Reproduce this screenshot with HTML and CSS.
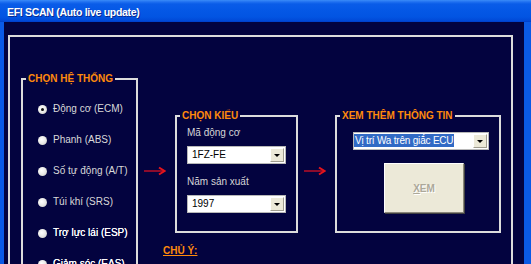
FILE: index.html
```html
<!DOCTYPE html>
<html lang="vi">
<head>
<meta charset="utf-8">
<title>EFI SCAN</title>
<link rel="stylesheet" href="styles.css">
</head>
<body>
<div class="window">
  <div class="titlebar"><span class="title">EFI SCAN (Auto live update)</span></div>
  <div class="client">
    <div class="frame">
      <fieldset class="group group-system">
        <legend>CHỌN HỆ THỐNG</legend>
        <div class="radios">
          <label class="radio checked"><span class="dot"></span>Động cơ (ECM)</label>
          <label class="radio"><span class="dot"></span>Phanh (ABS)</label>
          <label class="radio"><span class="dot"></span>Số tự động (A/T)</label>
          <label class="radio"><span class="dot"></span>Túi khí (SRS)</label>
          <label class="radio bright"><span class="dot"></span>Trợ lực lái (ESP)</label>
          <label class="radio bright"><span class="dot"></span>Giảm sóc (EAS)</label>
        </div>
      </fieldset>
      <div class="main">
        <div class="row">
          <svg class="arrow" width="22" height="10" viewBox="0 0 22 10"><line x1="0" y1="5" x2="19" y2="5" stroke="#8c0b2c" stroke-width="2"/><polyline points="15,1.5 20.5,5 15,8.5" fill="none" stroke="#e3141c" stroke-width="2"/></svg>
          <fieldset class="group group-model">
            <legend>CHỌN KIỂU</legend>
            <div class="model-body">
              <div class="field-label">Mã động cơ</div>
              <div class="select"><span class="value">1FZ-FE</span><span class="drop"></span></div>
              <div class="field-label second">Năm sản xuất</div>
              <div class="select"><span class="value">1997</span><span class="drop"></span></div>
            </div>
          </fieldset>
          <svg class="arrow" width="22" height="10" viewBox="0 0 22 10"><line x1="0" y1="5" x2="19" y2="5" stroke="#8c0b2c" stroke-width="2"/><polyline points="15,1.5 20.5,5 15,8.5" fill="none" stroke="#e3141c" stroke-width="2"/></svg>
          <fieldset class="group group-info">
            <legend>XEM THÊM THÔNG TIN</legend>
            <div class="info-body">
              <div class="select select-wide"><span class="value"><span class="highlight">Vị trí Wa trên giắc ECU</span></span><span class="drop"></span></div>
              <button class="btn" type="button" disabled><u>X</u>EM</button>
            </div>
          </fieldset>
        </div>
        <div class="note">CHỦ Ý:</div>
      </div>
    </div>
  </div>
</div>
</body>
</html>
```

FILE: styles.css
```css
html, body {
  margin: 0;
  padding: 0;
  overflow: hidden;
}

body {
  font-family: "Liberation Sans", Arial, sans-serif;
  background: #03033f;
}

.window {
  width: 531px;
  height: 264px;
  display: flex;
  flex-direction: column;
  overflow: hidden;
}

.titlebar {
  height: 22px;
  flex: none;
  display: flex;
  align-items: center;
  padding-left: 7px;
  background: linear-gradient(to bottom, #3a8cf8 0px, #1f6ff0 2px, #0a5ce8 4px, #0558e6 10px, #0254e2 17px, #0048d6 21px, #003cc4 22px);
}

.title {
  color: #ffffff;
  font-weight: bold;
  font-size: 10.5px;
  letter-spacing: -0.3px;
  text-shadow: 1px 1px 0 #0a2a90;
  margin-top: 1px;
}

.client {
  flex: 1;
  background: #03033f;
  border-left: 4px solid #0a5ae6;
  border-right: 7px solid #0a5ae6;
  overflow: hidden;
}

.frame {
  box-sizing: border-box;
  width: 505px;
  height: 320px;
  margin: 13px 0 0 4px;
  border: 2px solid #dcdcdc;
  display: flex;
  align-items: flex-start;
}

.group {
  margin: 0;
  padding: 0;
  border: 2px solid #dcdcdc;
  box-sizing: border-box;
  min-width: 0;
}

.group legend {
  margin-left: 3px;
  padding: 0 2px;
  font-size: 10px;
  line-height: 12px;
  font-weight: bold;
  color: #ff8a0c;
}

.group-system {
  width: 117px;
  height: 260px;
  margin: 36px 0 0 11px;
}

.radios {
  display: flex;
  flex-direction: column;
  gap: 19px;
  padding: 18px 0 0 15px;
}

.radio {
  display: flex;
  align-items: center;
  gap: 6px;
  font-size: 10px;
  line-height: 12px;
  color: #d9d9d9;
  white-space: nowrap;
}

.radio.bright {
  color: #ffffff;
  text-shadow: 0 0 0.2px #ffffff;
}

.dot {
  width: 9px;
  height: 9px;
  border-radius: 50%;
  background: radial-gradient(circle at 40% 40%, #ffffff 0%, #ececea 45%, #c8c8c0 100%);
  display: flex;
  align-items: center;
  justify-content: center;
  flex: none;
}

.radio.checked .dot::after {
  content: "";
  width: 3px;
  height: 3px;
  border-radius: 50%;
  background: #101010;
}

.main {
  display: flex;
  flex-direction: column;
  margin-top: 73px;
}

.row {
  display: flex;
  align-items: flex-start;
}

.arrow {
  display: block;
  flex: none;
  margin: 56px 9px 0 6px;
}

.group-model {
  width: 123px;
}

.model-body {
  padding: 5px 10px 18px 10px;
}

.field-label {
  font-size: 10px;
  line-height: 12px;
  color: #d6d6d6;
  margin-bottom: 7px;
}

.field-label.second {
  margin-top: 12px;
}

.select {
  box-sizing: border-box;
  width: 99px;
  height: 18px;
  background: #ffffff;
  border: 1px solid #b8b8b8;
  display: flex;
  align-items: stretch;
  font-size: 10px;
}

.select .value {
  flex: 1;
  padding-left: 4px;
  line-height: 16px;
  color: #000000;
  white-space: nowrap;
  overflow: hidden;
}

.drop {
  width: 14px;
  margin: 1px;
  box-sizing: border-box;
  background: #ece9d8;
  border-top: 1px solid #ffffff;
  border-left: 1px solid #ffffff;
  border-right: 1px solid #a09d90;
  border-bottom: 1px solid #a09d90;
  display: flex;
  align-items: center;
  justify-content: center;
}

.drop::after {
  content: "";
  width: 0;
  height: 0;
  border-left: 3px solid transparent;
  border-right: 3px solid transparent;
  border-top: 3px solid #000000;
  margin-top: 1px;
}

.group-info {
  width: 166px;
}

.info-body {
  padding: 10px 0 18px 16px;
  display: flex;
  flex-direction: column;
  align-items: flex-start;
}

.select-wide {
  width: 136px;
}

.select-wide .value {
  padding-left: 0;
}

.highlight {
  background: #316ac5;
  color: #ffffff;
  padding: 1px 1px;
  letter-spacing: -0.2px;
}

.btn {
  width: 80px;
  height: 50px;
  margin: 13px 0 0 31px;
  padding: 0;
  background: #ece9d8;
  border-top: 1px solid #ffffff;
  border-left: 1px solid #ffffff;
  border-right: 1px solid #8a877a;
  border-bottom: 1px solid #8a877a;
  box-shadow: 1px 1px 0 #404040;
  font-family: "Liberation Sans", Arial, sans-serif;
  font-size: 10px;
  font-weight: bold;
  color: #aca899;
  text-shadow: 1px 1px 0 #ffffff;
}

.note {
  margin-top: 12px;
  padding-left: 25px;
  font-size: 10px;
  line-height: 12px;
  font-weight: bold;
  color: #ff8a0c;
  text-decoration: underline;
}
```
